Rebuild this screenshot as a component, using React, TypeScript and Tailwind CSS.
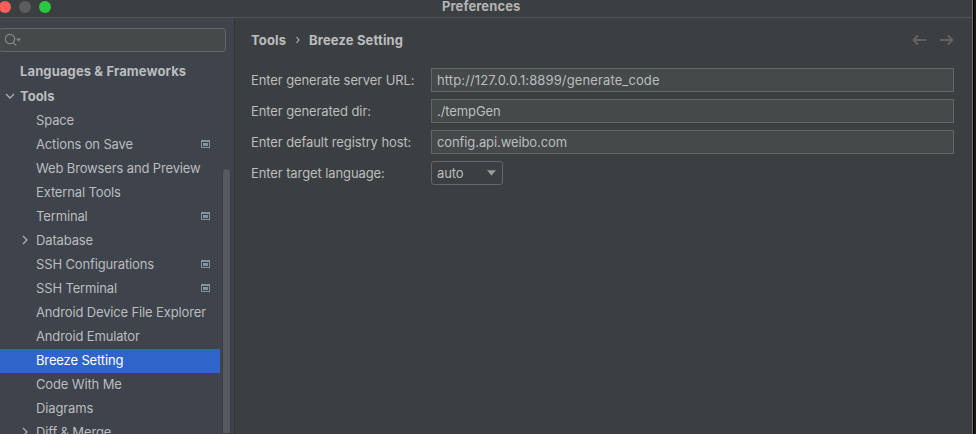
import type { ReactNode } from "react";

type Item = { label: string; project?: boolean; closed?: boolean };

const items: Item[] = [
  { label: "Space" },
  { label: "Actions on Save", project: true },
  { label: "Web Browsers and Preview" },
  { label: "External Tools" },
  { label: "Terminal", project: true },
  { label: "Database", closed: true },
  { label: "SSH Configurations", project: true },
  { label: "SSH Terminal", project: true },
  { label: "Android Device File Explorer" },
  { label: "Android Emulator" },
  { label: "Breeze Setting" },
  { label: "Code With Me" },
  { label: "Diagrams" },
  { label: "Diff & Merge", closed: true },
];

function ProjectIcon() {
  return (
    <svg className="ml-auto mr-[10px] shrink-0" width="9" height="8" viewBox="0 0 9 8">
      <path d="M0 0h9v8H0zM1 2v5h7V2z" fill="#83939f" fillRule="evenodd" />
      <path d="M2 3h5v3H2z" fill="#83939f" />
    </svg>
  );
}

function Chevron({ open }: { open?: boolean }) {
  return (
    <svg width="10" height="10" viewBox="0 0 10 10" fill="none" stroke="#adb0b3" strokeWidth="1.3">
      <path d={open ? "M1 3l4 4 4-4" : "M3 1l4 4-4 4"} />
    </svg>
  );
}

function TreeRow({ item }: { item: Item }) {
  const selected = item.label === "Breeze Setting";
  return (
    <div className={`flex h-6 w-[220px] shrink-0 items-center pb-[2px] ${selected ? "bg-[#2f65ca] text-white" : ""}`}>
      <span className="flex w-9 shrink-0 pl-5">{item.closed && <Chevron />}</span>
      <span className="whitespace-nowrap pb-px">{item.label}</span>
      {item.project && <ProjectIcon />}
    </div>
  );
}

function Field({ label, children }: { label: string; children: ReactNode }) {
  return (
    <div className="flex h-6 items-center">
      <span className="w-[180px] shrink-0 whitespace-nowrap">{label}</span>
      {children}
    </div>
  );
}

function TextBox({ value, wide }: { value: string; wide?: boolean }) {
  return (
    <div className={`flex h-6 w-[523px] items-center border border-[#646667] bg-[#45494a] px-[5px] ${wide ? "tracking-[0.12px]" : ""}`}>
      {value}
    </div>
  );
}

export default function App() {
  return (
    <div className="flex h-[434px] w-[976px] overflow-hidden bg-[#171818] font-['Inter','Liberation_Sans',sans-serif] text-[13px] leading-4 tracking-[-0.1px] text-[#bbbdbf]">
      <div className="flex w-[974px] flex-col border-r border-black bg-[#3c3f41]">
        <div className="flex min-h-0 flex-1 flex-col border-r border-[#6b6d6e]">
          <header className="flex h-[18px] shrink-0 border-b border-[#515354]">
            <div className="-ml-px flex w-[443px] shrink-0 gap-2 pt-px">
              <i className="size-3 rounded-full bg-[#ff5f57]" />
              <i className="size-3 rounded-full bg-[#5b5c5e]" />
              <i className="size-3 rounded-full bg-[#28c840]" />
            </div>
            <span className="-mt-[2px] whitespace-nowrap font-bold tracking-[0.1px] text-[#b2b4b5]">Preferences</span>
          </header>
          <div className="flex min-h-0 flex-1">
            <aside className="flex w-[235px] shrink-0 flex-col overflow-hidden border-r border-[#323437] bg-[#3e434c] tracking-[-0.14px]">
              <div className="-ml-px mt-[10px] flex h-6 w-[227px] shrink-0 items-center rounded-[3px] border border-[#646667] bg-[#45494a] pl-[5px]">
                <svg width="18" height="14" viewBox="0 0 18 14" fill="none" stroke="#85898c" strokeWidth="1.2">
                  <circle cx="5" cy="6" r="4.7" />
                  <path d="M8.2 9.3l3 3.2" />
                  <path d="M11 5.5h5l-2.5 3z" fill="#85898c" stroke="none" />
                </svg>
              </div>
              <div className="flex min-h-0 flex-1">
                <nav className="flex w-[222px] shrink-0 flex-col overflow-hidden pt-2">
                  <div className="flex h-[25px] shrink-0 items-center whitespace-nowrap pb-[3px] pl-5 font-bold tracking-[0.12px]">Languages &amp; Frameworks</div>
                  <div className="flex h-6 shrink-0 items-center whitespace-nowrap pb-[3px] pl-[5px] font-bold tracking-normal">
                    <Chevron open />
                    <span className="ml-[5px]">Tools</span>
                  </div>
                  {items.map((item) => <TreeRow key={item.label} item={item} />)}
                </nav>
                <div className="mt-[116px] w-[9px] rounded-t-full border border-[#3a3d42] bg-[#565960]" />
              </div>
            </aside>
            <main className="flex flex-1 flex-col pl-4">
              <div className="flex h-[50px] shrink-0 items-center pb-[6px] font-bold tracking-[0.16px]">
                <span className="-mt-px w-[35px]">Tools</span>
                <svg className="mx-[9px]" width="5" height="8" viewBox="0 0 5 8" fill="none" stroke="#bbbdbf" strokeWidth="1.1"><path d="M1.5 1l2.4 3-2.4 3" /></svg>
                <span className="-mt-px">Breeze Setting</span>
                <svg className="ml-auto mr-[18px]" width="42" height="12" viewBox="0 0 42 12" fill="none" stroke="#606263" strokeWidth="1.9">
                  <path d="M14 6H2M6 1.5L1.5 6 6 10.5M28 6h12M36 1.5L40.5 6 36 10.5" />
                </svg>
              </div>
              <div className="flex flex-col gap-[7px]">
                <Field label="Enter generate server URL:"><TextBox wide value="http://127.0.0.1:8899/generate_code" /></Field>
                <Field label="Enter generated dir:"><TextBox value="./tempGen" /></Field>
                <Field label="Enter default registry host:"><TextBox value="config.api.weibo.com" /></Field>
                <Field label="Enter target language:">
                  <div className="flex h-6 w-[72px] items-center justify-between rounded-[3px] border border-[#646667] pl-[5px] pr-[6px]">
                    <span>auto</span>
                    <svg width="9" height="6" viewBox="0 0 9 6" fill="#9b9d9e"><path d="M0 .3h9L4.5 5.5z" /></svg>
                  </div>
                </Field>
              </div>
            </main>
          </div>
        </div>
      </div>
    </div>
  );
}
